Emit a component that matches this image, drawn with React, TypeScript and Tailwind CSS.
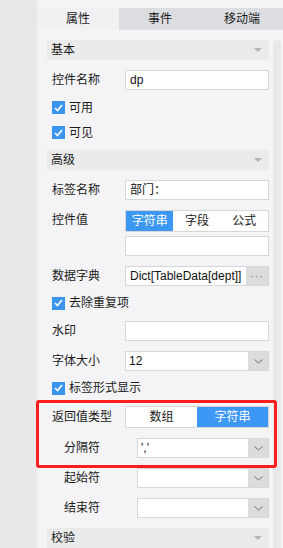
import React from "react";

const font = {
  fontFamily: '"Liberation Sans", "Noto Sans CJK SC", sans-serif',
};

function SectionHeader({ title }: { title: string }) {
  return (
    <div className="flex h-[20px] items-center justify-between bg-[#ebebec] pl-[4px] pr-[7px]">
      <span className="text-[12px] leading-none text-[#1a1a1a]">{title}</span>
      <svg width="8" height="4" viewBox="0 0 8 4">
        <polygon points="0,0 8,0 4,4" fill="#b4b4b6" />
      </svg>
    </div>
  );
}

function Row({
  label,
  indent = false,
  children,
  className = "",
}: {
  label: string;
  indent?: boolean;
  children: React.ReactNode;
  className?: string;
}) {
  return (
    <div className={`flex items-center ${indent ? "pl-[17px]" : "pl-[5px]"} ${className}`}>
      <span className="w-[73px] shrink-0 text-[12px] leading-none text-[#1a1a1a]">{label}</span>
      <div className="min-w-0 flex-1">{children}</div>
    </div>
  );
}

function TextBox({ value = "" }: { value?: string }) {
  return (
    <div className="flex h-[20px] items-center border border-[#d6d6d8] bg-white pl-[4px] text-[12px] leading-none text-[#111]">
      {value}
    </div>
  );
}

function Chevron() {
  return (
    <svg width="9" height="5" viewBox="0 0 9 5">
      <polyline points="0.5,0.5 4.5,4 8.5,0.5" fill="none" stroke="#6e6e70" strokeWidth="1" />
    </svg>
  );
}

function SelectBox({ value = "" }: { value?: string }) {
  return (
    <div className="flex h-[20px] border border-[#d6d6d8] bg-white">
      <div className="flex flex-1 items-center pl-[3px] text-[12px] leading-none text-[#111]">{value}</div>
      <div className="flex w-[20px] items-center justify-center bg-[#dcdcde]">
        <Chevron />
      </div>
    </div>
  );
}

function CheckItem({ label, className = "" }: { label: string; className?: string }) {
  return (
    <div className={`flex items-center gap-[4px] pl-[5px] ${className}`}>
      <span className="flex h-[13px] w-[13px] items-center justify-center bg-[#3b95ef]">
        <svg width="9" height="8" viewBox="0 0 9 8">
          <polyline points="1,4 3.5,6.5 8,1" fill="none" stroke="#fff" strokeWidth="1.6" />
        </svg>
      </span>
      <span className="text-[12px] leading-none text-[#1a1a1a]">{label}</span>
    </div>
  );
}

function Segmented({ items, active }: { items: string[]; active: number }) {
  return (
    <div className="flex h-[22px] border border-[#d6d6d8] bg-white">
      {items.map((item, i) => (
        <div
          key={item}
          className={`flex flex-1 items-center justify-center text-[12px] leading-none ${
            i === active ? "bg-[#3d98f5] text-white" : "text-[#1a1a1a]"
          }`}
        >
          {item}
        </div>
      ))}
    </div>
  );
}

export default function App() {
  return (
    <div className="flex h-[548px] w-[283px] overflow-hidden bg-[#f4f4f6]" style={font}>
      {/* left strip */}
      <div className="w-[37px] shrink-0 bg-[#e8e8e9]" />

      <div className="flex flex-1 flex-col pt-[8px]">
        {/* tabs */}
        <div className="flex h-[24px] bg-[#dcdde0] text-[12px] leading-none text-[#1a1a1a]">
          <div className="flex flex-1 items-center justify-center bg-[#f1f1f3]">属性</div>
          <div className="flex flex-1 items-center justify-center">事件</div>
          <div className="flex flex-1 items-center justify-center">移动端</div>
        </div>

        <div className="flex flex-1 pl-[10px] pt-[10px]">
          <div className="flex w-[222px] shrink-0 flex-col">
            <SectionHeader title="基本" />
            <Row label="控件名称" className="mt-[10px]">
              <TextBox value="dp" />
            </Row>
            <CheckItem label="可用" className="mt-[5px] h-[25px]" />
            <CheckItem label="可见" className="h-[25px]" />

            <div className="mt-[5px]">
              <SectionHeader title="高级" />
            </div>
            <div className="mt-[10px]">
              <Row label="标签名称">
                <TextBox value="部门：" />
              </Row>
            </div>
            <div className="mt-[10px] flex items-start pl-[5px]">
              <span className="w-[73px] shrink-0 pt-[4px] text-[12px] leading-none text-[#1a1a1a]">控件值</span>
              <div className="flex flex-1 flex-col gap-[4px]">
                <Segmented items={["字符串", "字段", "公式"]} active={0} />
                <TextBox />
              </div>
            </div>
            <Row label="数据字典" className="mt-[10px]">
              <div className="flex h-[20px] border border-[#d6d6d8] bg-white">
                <div className="flex flex-1 items-center overflow-hidden whitespace-nowrap pl-[4px] text-[12px] leading-none text-[#111]">
                  Dict[TableData[dept]]
                </div>
                <div className="flex w-[22px] items-center justify-center bg-[#dcdcde] text-[11px] leading-none tracking-[1px] text-[#777]">
                  ···
                </div>
              </div>
            </Row>
            <CheckItem label="去除重复项" className="mt-[7px] h-[20px]" />
            <Row label="水印" className="mt-[8px]">
              <TextBox />
            </Row>
            <Row label="字体大小" className="mt-[10px]">
              <SelectBox value="12" />
            </Row>
            <CheckItem label="标签形式显示" className="mt-[7px] h-[20px]" />

            {/* highlighted group */}
            <div className="relative z-10 -ml-[11px] -mr-[8px] mt-[2px] rounded-[3px] border-[3px] border-[#fa1e1e] pb-[7px] pl-[8px] pr-[5px] pt-[3px]">
              <Row label="返回值类型">
                <Segmented items={["数组", "字符串"]} active={1} />
              </Row>
              <Row label="分隔符" indent className="mt-[10px]">
                <SelectBox value="','" />
              </Row>
            </div>

            <Row label="起始符" indent>
              <SelectBox />
            </Row>
            <Row label="结束符" indent className="mt-[10px]">
              <SelectBox />
            </Row>
            <div className="mt-[10px]">
              <SectionHeader title="校验" />
            </div>
          </div>

          {/* scrollbar track */}
          <div className="ml-[4px] w-[8px] shrink-0 rounded-t-[4px] bg-[#e8e8ea]" />
        </div>
      </div>
    </div>
  );
}
